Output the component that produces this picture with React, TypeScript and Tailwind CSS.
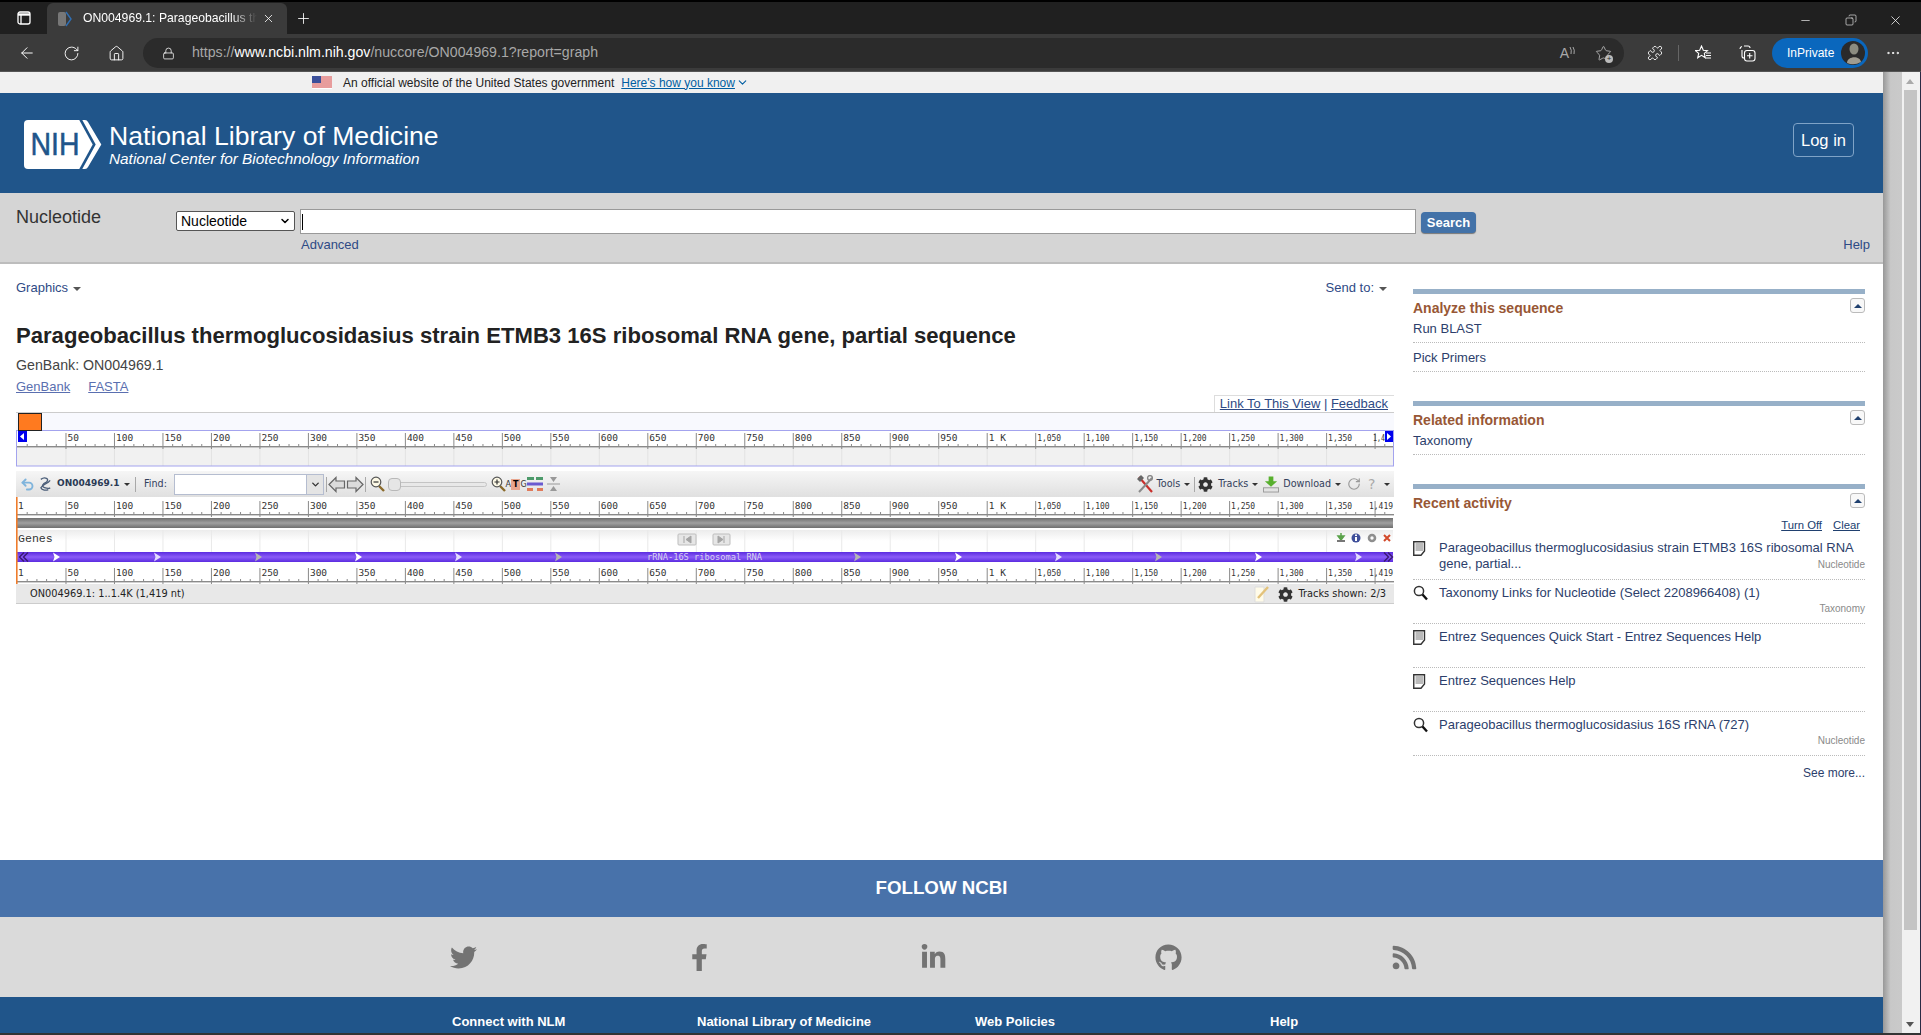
import React from "react";
import { ArrowLeft, RotateCw, Home, Lock, Plus, X, Minus, Star, Puzzle, MoreHorizontal, ChevronDown, Copy, Undo2 } from "lucide-react";
import { FaTwitter, FaFacebookF, FaLinkedinIn, FaGithub, FaRss, FaCog } from "react-icons/fa";

const PXN = 1376 / 1419;
const px = (n: number) => n * PXN + 1;

const labels: [number, string][] = [
  [50, "50"], [100, "100"], [150, "150"], [200, "200"], [250, "250"], [300, "300"], [350, "350"],
  [400, "400"], [450, "450"], [500, "500"], [550, "550"], [600, "600"], [650, "650"], [700, "700"],
  [750, "750"], [800, "800"], [850, "850"], [900, "900"], [950, "950"], [1000, "1 K"], [1050, "1,050"],
  [1100, "1,100"], [1150, "1,150"], [1200, "1,200"], [1250, "1,250"], [1300, "1,300"], [1350, "1,350"],
];

const minorTicks: number[] = [];
for (let n = 10; n < 1419; n += 10) minorTicks.push(n);

// one ruler, y is where the horizontal line sits
const Ruler = ({ y, first, last }: { y: number; first?: boolean; last?: string }) => (
  <g>
    <rect x="0" y={y} width="1378" height="1.4" fill="#8a8a8a" />
    {minorTicks.map((n) => (
      <rect key={n} x={px(n)} y={n % 50 === 0 ? y - 13 : y - 2} width="1" height={n % 50 === 0 ? 16 : 2} fill="#8a8a8a" />
    ))}
    {labels.map(([n, t]) => (
      <text
        key={n}
        x={px(n) + 2}
        y={y - 5}
        fontFamily="'DejaVu Sans Mono', monospace"
        fontSize="9.5"
        fill="#333"
        textLength={t.length === 5 ? 24 : undefined}
        lengthAdjust="spacingAndGlyphs"
      >
        {t}
      </text>
    ))}
    {first && (
      <text x="2" y={y - 5} fontFamily="'DejaVu Sans Mono', monospace" fontSize="9.5" fill="#333">
        1
      </text>
    )}
    {last && (
      <text x="1353" y={y - 5} fontFamily="'DejaVu Sans Mono', monospace" fontSize="9.5" fill="#333" textLength="24" lengthAdjust="spacingAndGlyphs">
        {last}
      </text>
    )}
  </g>
);

const arrows: [number, string][] = [
  [37, "#ffffff"], [138, "#e4dcff"], [239, "#b5b5b5"], [339, "#ffffff"], [439, "#e4dcff"], [539, "#b5b5b5"],
  [838, "#b5b5b5"], [939, "#ffffff"], [1039, "#e4dcff"], [1139, "#b5b5b5"], [1239, "#ffffff"], [1339, "#e4dcff"],
];

const Overview = () => (
  <svg width="1378" height="55" className="block">
    <rect x="0" y="0" width="1378" height="19" fill="#f8f9fe" />
    <rect x="0" y="0" width="1378" height="1" fill="#cccccc" />
    <rect x="0" y="19" width="1378" height="36" fill="#ffffff" />
    <rect x="1" y="35" width="1376" height="19" fill="#f1f1f1" />
    {labels.map(([n]) => (
      <rect key={n} x={px(n)} y="35" width="1" height="19" fill="#e2e2e2" />
    ))}
    <Ruler y={34} />
    <text x="1357" y="29" fontFamily="'DejaVu Sans Mono', monospace" fontSize="9.5" fill="#333" textLength="12" lengthAdjust="spacingAndGlyphs">
      1,4
    </text>
    <rect x="0.5" y="18.5" width="1377" height="35.5" fill="none" stroke="#a3a3ee" />
    <rect x="2.5" y="1.5" width="23" height="17" fill="#ff7a1f" stroke="#222" strokeWidth="1" />
    <rect x="2" y="19" width="9" height="11" fill="#0000ee" />
    <path d="M4 24.5 L8 21 L8 28 Z" fill="#fff" />
    <rect x="1369" y="19" width="8" height="11" fill="#0000ee" />
    <path d="M1375 24.5 L1371 21 L1371 28 Z" fill="#fff" />
  </svg>
);

const Tracks = () => (
  <svg width="1378" height="87" className="block">
    <defs>
      <linearGradient id="greybar" x1="0" y1="0" x2="0" y2="1">
        <stop offset="0" stopColor="#6f6f6f" />
        <stop offset="0.5" stopColor="#a0a0a0" />
        <stop offset="1" stopColor="#6f6f6f" />
      </linearGradient>
      <linearGradient id="genebar" x1="0" y1="0" x2="0" y2="1">
        <stop offset="0" stopColor="#5b2be0" />
        <stop offset="0.5" stopColor="#8a5cf7" />
        <stop offset="1" stopColor="#5b2be0" />
      </linearGradient>
      <linearGradient id="genesrow" x1="0" y1="0" x2="0" y2="1">
        <stop offset="0" stopColor="#ececec" />
        <stop offset="0.5" stopColor="#ffffff" />
      </linearGradient>
    </defs>
    <rect x="1" y="33" width="1376" height="22" fill="url(#genesrow)" />
    {labels.map(([n]) => (
      <rect key={n} x={px(n)} y="33" width="1" height="22" fill="#e9e9e9" />
    ))}
    <Ruler y={17} first last="1,419" />
    <rect x="1" y="21" width="1376" height="10" fill="url(#greybar)" />
    <text x="2" y="45" fontFamily="'Liberation Mono', monospace" fontSize="11.6" fill="#333">
      Genes
    </text>
    <rect x="662" y="37" width="18" height="11" rx="1" fill="#e6e6e6" stroke="#bdbdbd" />
    <path d="M668 39 V46 M675 39 L670 42.5 L675 46 Z" stroke="#a5a5a5" fill="#a5a5a5" />
    <rect x="697" y="37" width="17" height="11" rx="1" fill="#e6e6e6" stroke="#bdbdbd" />
    <path d="M708 39 V46 M702 39 L707 42.5 L702 46 Z" stroke="#a5a5a5" fill="#a5a5a5" />
    {/* small track icons */}
    <path d="M1325 36 L1325 40 M1322 39 L1325 43 L1328 39 Z" stroke="#5aa24a" strokeWidth="1.5" fill="#5aa24a" />
    <rect x="1321" y="43" width="8" height="2" fill="#777" />
    <circle cx="1340" cy="41" r="4.5" fill="#3f4f9a" />
    <rect x="1339" y="40" width="2" height="4" fill="#fff" />
    <rect x="1339" y="37.5" width="2" height="1.5" fill="#fff" />
    <circle cx="1356" cy="41" r="3" fill="none" stroke="#8e8e8e" strokeWidth="2.6" />
    <path d="M1368 38 L1374 44 M1374 38 L1368 44" stroke="#d2492a" strokeWidth="2" />
    <rect x="1" y="55" width="1376" height="10" fill="url(#genebar)" />
    <path d="M8 55.5 L3.5 60 L8 64.5 M12 55.5 L7.5 60 L12 64.5" fill="none" stroke="#3a1a70" strokeWidth="1.4" />
    <path d="M1368 55.5 L1372.5 60 L1368 64.5 M1372 55.5 L1376.5 60 L1372 64.5" fill="none" stroke="#3a1a70" strokeWidth="1.4" />
    {arrows.map(([x, c]) => (
      <path key={x} d={`M${x} 55.5 L${x + 7} 60 L${x} 64.5 L${x + 1.5} 60 Z`} fill={c} />
    ))}
    <text x="631" y="63" fontFamily="'DejaVu Sans Mono', monospace" fontSize="8.7" fill="#d8d0f0">
      rRNA-16S ribosomal RNA
    </text>
    <Ruler y={84} first last="1,419" />
    <rect x="0" y="0" width="1.6" height="87" fill="#ef7c2c" />
  </svg>
);

const Caret = () => <span className="ml-[4px] mt-[1px] h-0 w-0 border-x-[3px] border-t-[3px] border-x-transparent border-t-[#333]" />;
const BigCaret = () => <span className="ml-[5px] mt-[2px] h-0 w-0 border-x-[4px] border-t-[4px] border-x-transparent border-t-[#555]" />;

const ToolSep = ({ cls }: { cls: string }) => <span className={`h-[15px] w-px bg-[#a8a8a8] ${cls}`} />;

const Magnifier = ({ plus, cls }: { plus?: boolean; cls: string }) => (
  <svg width="15" height="16" viewBox="0 0 15 16" className={cls}>
    <path d="M9 10 L14 15" stroke="#8a6a2a" strokeWidth="2.4" />
    <circle cx="6" cy="6" r="4.8" fill="#fdf9e6" stroke="#555" strokeWidth="1.2" />
    <path d={plus ? "M3.5 6 H8.5 M6 3.5 V8.5" : "M3.5 6 H8.5"} stroke="#333" strokeWidth="1.2" />
  </svg>
);

const Toolbar = () => (
  <div className="flex h-[26px] w-[1378px] items-center bg-gradient-to-b from-[#f6f6f6] to-[#e0e0e0] font-['DejaVu_Sans',sans-serif] text-[9.6px] text-[#33415c]">
    <Undo2 className="ml-[4px] h-[15px] w-[15px] text-[#7fb4dc]" strokeWidth={3} />
    <svg width="13" height="16" viewBox="0 0 14 16" className="ml-[4px]" fill="none" stroke="#4a5d78" strokeWidth="1.4">
      <path d="M2 3 C6 0 12 2 8 6 C4 8 2 10 6 12 C9 13 11 13 12 12" />
      <path d="M12 4 C9 8 4 8 2 12 C3 15 8 15 10 14" />
    </svg>
    <span className="ml-[5px] w-[63px] text-[9px] font-bold text-[#2a3a55]">ON004969.1</span>
    <Caret />
    <ToolSep cls="ml-[5px]" />
    <span className="ml-[8px] w-[24px]">Find:</span>
    <span className="ml-[6px] flex h-[21px] w-[150px] items-center justify-end border border-[#b5bdd0] bg-white">
      <span className="flex h-full w-[17px] items-center justify-center border-l border-[#b5bdd0] bg-[#e4e4e4]">
        <ChevronDown className="h-[11px] w-[11px] text-[#333]" strokeWidth={3} />
      </span>
    </span>
    <ToolSep cls="ml-[2px]" />
    <svg width="36" height="17" viewBox="0 0 36 17" className="ml-[1px]" fill="#dcdcdc" stroke="#666" strokeWidth="1.2">
      <path d="M1 8.5 L8 1.5 V5 H16.5 V12 H8 V15.5 Z" />
      <path d="M35 8.5 L28 1.5 V5 H19.5 V12 H28 V15.5 Z" />
    </svg>
    <ToolSep cls="ml-[1px]" />
    <Magnifier cls="ml-[4px]" />
    <span className="relative ml-[3px] h-[5px] w-[99px] rounded-full border border-[#c4c4c4] bg-[#e8e8e8]">
      <span className="absolute -left-px -top-[5px] h-[13px] w-[13px] rounded-sm border border-[#b8b8b8] bg-[#e6e6e6]" />
    </span>
    <Magnifier plus cls="ml-[4px]" />
    <span className="ml-[2px] flex w-[16px] items-center justify-center text-[8px] leading-[11px] text-[#333]">
      A<span className="bg-[#e8a58e] px-[2px] font-bold text-black">T</span>G
    </span>
    <svg width="16" height="14" viewBox="0 0 16 14" className="ml-[3px]">
      <rect x="0" y="0" width="7" height="3" fill="#4c9a6a" />
      <rect x="9" y="0" width="7" height="3" fill="#4c9a6a" />
      <rect x="0" y="5.5" width="16" height="3" fill="#6a5ad0" />
      <rect x="0" y="11" width="6" height="3" fill="#e07a5a" />
      <rect x="10" y="11" width="6" height="3" fill="#e07a5a" />
    </svg>
    <svg width="13" height="14" viewBox="0 0 13 14" className="ml-[4px]" fill="#999">
      <path d="M3 0 H10 L6.5 5 Z M3 14 H10 L6.5 9 Z" />
      <rect x="0" y="6.5" width="13" height="1" />
    </svg>
    <span className="flex-1" />
    <svg width="16" height="18" viewBox="0 0 16 18" fill="none">
      <path d="M2 2 L15 17" stroke="#c9302c" strokeWidth="2.2" />
      <path d="M15 3 L2 17" stroke="#8a8a8a" strokeWidth="2" />
      <path d="M0 4 L4 0 L7 3 L3 7 Z" fill="#666" />
      <circle cx="13" cy="3" r="2.4" fill="none" stroke="#888" strokeWidth="1.4" />
    </svg>
    <span className="ml-[4px]">Tools</span>
    <Caret />
    <ToolSep cls="ml-[4px]" />
    <FaCog className="ml-[3px] h-[15px] w-[15px] text-[#333]" />
    <span className="ml-[5px]">Tracks</span>
    <Caret />
    <svg width="16" height="17" viewBox="0 0 17 17" className="ml-[5px]">
      <path d="M6 0 H11 V5 H15 L8.5 11 L2 5 H6 Z" fill="#58b02e" />
      <rect x="0.5" y="12" width="16" height="4.5" fill="#e3e3e3" stroke="#999" />
    </svg>
    <span className="ml-[4px]">Download</span>
    <Caret />
    <RotateCw className="ml-[6px] h-[14px] w-[14px] text-[#999]" />
    <span className="ml-[7px] w-[10px] text-[14px] leading-none text-[#aaa]">?</span>
    <span className="ml-[2px]" />
    <Caret />
    <span className="w-[4px]" />
  </div>
);

const StatusBar = () => (
  <div className="flex h-[20px] w-[1378px] items-center border-b border-[#ccc] bg-[#e8e8e8] pt-[1px] font-['DejaVu_Sans',sans-serif] text-[9.8px] text-[#222]">
    <span className="ml-[14px]">ON004969.1: 1..1.4K (1,419 nt)</span>
    <span className="flex-1" />
    <svg width="16" height="18" viewBox="0 0 16 18" fill="none">
      <path d="M1 2 H10 V17 H1 Z" fill="#fffbe8" stroke="#ddd" />
      <path d="M4 13 L14 2" stroke="#e3c27a" strokeWidth="2.4" />
    </svg>
    <FaCog className="ml-[8px] h-[15px] w-[15px] text-[#333]" />
    <span className="ml-[5px] mr-[8px]">Tracks shown: 2/3</span>
  </div>
);

const DocIcon = () => (
  <svg width="13" height="15" viewBox="0 0 13 15" className="mt-[1px]">
    <path d="M0.75 0.75 H11.5 V10 L8 14.25 H0.75 Z" fill="#fff" stroke="#333" strokeWidth="1.4" />
    <path d="M2.5 3 H10 M2.5 5 H10 M2.5 7 H10 M2.5 9 H10" stroke="#777" />
  </svg>
);

const GlassIcon = () => (
  <svg width="15" height="16" viewBox="0 0 15 16">
    <circle cx="6" cy="6" r="4.6" fill="#fff" stroke="#333" strokeWidth="1.5" />
    <path d="M9.5 9.5 L14 14.5" stroke="#111" strokeWidth="2.4" />
  </svg>
);

const CollapseBtn = () => (
  <span className="flex h-[15px] w-[15px] items-center justify-center rounded-[3px] border border-[#bbb] bg-[#f8f8f8]">
    <span className="h-0 w-0 border-x-[4px] border-b-[4px] border-x-transparent border-b-[#20406f]" />
  </span>
);

const PortletHead = ({ title }: { title: string }) => (
  <>
    <div className="h-[5px] bg-[#97b0c8]" />
    <div className="flex h-[21px] items-start justify-between pt-[4px]">
      <span className="text-[14px] font-bold leading-[20px] text-[#985735]">{title}</span>
      <CollapseBtn />
    </div>
  </>
);

const PlainRow = ({ text, cls }: { text: string; cls: string }) => (
  <div className={`flex items-center border-b border-dotted border-[#bbb] pt-[1px] text-[13px] text-[#2c3e6b] ${cls}`}>{text}</div>
);

const activity: { kind: "doc" | "find"; text: string; tag?: string; h: string }[] = [
  { kind: "doc", text: "Parageobacillus thermoglucosidasius strain ETMB3 16S ribosomal RNA gene, partial...", tag: "Nucleotide", h: "h-[45px]" },
  { kind: "find", text: "Taxonomy Links for Nucleotide (Select 2208966408) (1)", tag: "Taxonomy", h: "h-[44px]" },
  { kind: "doc", text: "Entrez Sequences Quick Start - Entrez Sequences Help", h: "h-[44px]" },
  { kind: "doc", text: "Entrez Sequences Help", h: "h-[44px]" },
  { kind: "find", text: "Parageobacillus thermoglucosidasius 16S rRNA (727)", tag: "Nucleotide", h: "h-[44px]" },
];

const Sidebar = () => (
  <div className="ml-[19px] w-[452px] pt-[25px]">
    <PortletHead title="Analyze this sequence" />
    <PlainRow text="Run BLAST" cls="h-[28px]" />
    <PlainRow text="Pick Primers" cls="h-[29px]" />
    <div className="h-[29px]" />
    <PortletHead title="Related information" />
    <PlainRow text="Taxonomy" cls="h-[28px]" />
    <div className="h-[29px]" />
    <PortletHead title="Recent activity" />
    <div className="flex h-[25px] items-end justify-end gap-[11px] pb-[3px] pr-[5px] text-[11.3px] leading-[14px] text-[#20406f] underline">
      <span>Turn Off</span>
      <span>Clear</span>
    </div>
    {activity.map((a, i) => (
      <div key={i} className={`relative flex border-b border-dotted border-[#bbb] pt-[5px] text-[13px] leading-[16px] text-[#2c3e6b] ${a.h}`}>
        <span className="w-[26px] shrink-0">{a.kind === "doc" ? <DocIcon /> : <GlassIcon />}</span>
        <span>{a.text}</span>
        {a.tag && <span className="absolute bottom-[8px] right-0 text-[10px] leading-[12px] text-[#8a8a8a]">{a.tag}</span>}
      </div>
    ))}
    <div className="pt-[9px] text-right text-[12px] leading-[16px] text-[#2c3e6b]">See more...</div>
  </div>
);

const BrowserChrome = () => (
  <div className="font-['Liberation_Sans',sans-serif]">
    <div className="flex h-[34px] items-end border-t-2 border-black bg-[#202020]">
      <svg width="14" height="14" viewBox="0 0 14 14" className="mb-[9px] ml-[17px]" fill="none" stroke="#fff" strokeWidth="1.3">
        <rect x="1" y="1" width="12" height="12" rx="2" />
        <path d="M1 3.5 H13" strokeWidth="2.4" />
        <path d="M4 3 V13" />
      </svg>
      <div className="ml-[16px] flex h-[31px] w-[240px] items-center rounded-t-[6px] bg-[#3b3b3b]">
        <svg width="14" height="16" viewBox="0 0 14 16" className="ml-[11px]">
          <rect x="0" y="1" width="8" height="14" rx="2" fill="#777" />
          <path d="M8 1 L13 8 L8 15" fill="none" stroke="#2f6fb5" strokeWidth="1.4" />
        </svg>
        <span className="ml-[11px] w-[174px] overflow-hidden whitespace-nowrap text-[12.2px] text-white [mask-image:linear-gradient(to_right,black_85%,transparent)]">
          ON004969.1: Parageobacillus the
        </span>
        <X className="ml-[5px] h-[13px] w-[13px] text-white" strokeWidth={1.5} />
      </div>
      <Plus className="mb-[7px] ml-[8px] h-[17px] w-[17px] text-white" strokeWidth={1.2} />
      <span className="flex-1" />
      <Minus className="mb-[7px] mr-[33px] h-[13px] w-[13px] text-white" strokeWidth={1.2} />
      <Copy className="mb-[8px] mr-[31px] h-[12px] w-[12px] -scale-x-100 text-white" strokeWidth={1.2} />
      <X className="mb-[6px] mr-[18px] h-[15px] w-[15px] text-white" strokeWidth={1.2} />
    </div>
    <div className="flex h-[38px] items-center border-b border-[#555] bg-[#3b3b3b] pt-[1px]">
      <ArrowLeft className="ml-[18px] h-[18px] w-[18px] text-white" strokeWidth={1.3} />
      <RotateCw className="ml-[27px] h-[17px] w-[17px] text-white" strokeWidth={1.3} />
      <Home className="ml-[28px] h-[17px] w-[17px] text-white" strokeWidth={1.3} />
      <div className="ml-[18px] flex h-[30px] w-[1481px] items-center rounded-full bg-[#2b2b2b] pr-[12px]">
        <Lock className="ml-[19px] h-[15px] w-[13px] text-white" strokeWidth={1.4} />
        <span className="ml-[17px] text-[14.15px] text-[#a8a8a8]">
          https://<span className="text-white">www.ncbi.nlm.nih.gov</span>/nuccore/ON004969.1?report=graph
        </span>
        <span className="flex-1" />
        <span className="text-[14px] text-[#a8a8a8]">A</span>
        <svg width="6" height="9" viewBox="0 0 6 9" fill="none" stroke="#a8a8a8" className="mb-[6px] mr-[20px]">
          <path d="M1 1 Q3 4 2 8 M4 1 Q6 4 5 8" />
        </svg>
        <span className="relative">
          <Star className="h-[17px] w-[17px] text-[#bbb]" strokeWidth={1.2} />
          <span className="absolute -bottom-[1px] -right-[1px] flex h-[8px] w-[8px] items-center justify-center rounded-full bg-[#bbb] text-[8px] leading-none text-[#2b2b2b]">+</span>
        </span>
      </div>
      <Puzzle className="ml-[23px] h-[16px] w-[16px] text-white" strokeWidth={1.3} />
      <span className="ml-[15px] h-[16px] w-px bg-[#666]" />
      <svg width="17" height="16" viewBox="0 0 17 16" className="ml-[16px]" fill="none" stroke="#fff" strokeWidth="1.1">
        <path d="M6.5 1 L8.3 5.2 L12.5 5.6 L9.3 8.4 L10.3 12.8 L6.5 10.4 L2.7 12.8 L3.7 8.4 L0.5 5.6 L4.7 5.2 Z" />
        <path d="M11 8 H16 M11 10.5 H16 M11 13 H16" />
      </svg>
      <svg width="17" height="17" viewBox="0 0 17 17" className="ml-[27px]" fill="none" stroke="#fff" strokeWidth="1.1">
        <path d="M5 1 H9 Q11 1 11 3 M3 5 V11 Q3 13 5 13" />
        <path d="M1 4 Q1 2 3 1.5" />
        <rect x="5.5" y="5.5" width="10.5" height="10.5" rx="2.5" />
        <path d="M10.7 8 V13.5 M8 10.7 H13.5" />
      </svg>
      <div className="ml-[16px] flex h-[30px] w-[96px] items-center rounded-full bg-[#0a67bd] pl-[15px]">
        <span className="text-[12px] text-white">InPrivate</span>
        <svg width="26" height="26" viewBox="0 0 26 26" className="ml-[6px]">
          <circle cx="13" cy="13" r="12" fill="#2a2a2a" />
          <ellipse cx="14" cy="9" rx="4.5" ry="5.5" fill="#8c8c80" />
          <path d="M7 23 C7 16 20 15 21 22 Q14 26 7 23 Z" fill="#a09c90" />
        </svg>
      </div>
      <MoreHorizontal className="ml-[17px] h-[16px] w-[16px] text-white" strokeWidth={1.5} />
    </div>
  </div>
);

const Flag = () => (
  <svg width="20" height="13" viewBox="0 0 20 13">
    <rect width="20" height="13" fill="#fff" />
    <path d="M0 1 H20 M0 3 H20 M0 5 H20 M0 7 H20 M0 9 H20 M0 11 H20" stroke="#d03b3b" strokeWidth="1" />
    <rect width="9" height="7" fill="#3b4f9a" />
  </svg>
);

const NihLogo = () => (
  <svg width="78" height="49" viewBox="0 0 78 49" className="mt-[3px] shrink-0">
    <path d="M4 0 H55.3 L68.7 24.5 L55.3 49 H4 Q0 49 0 45 V4 Q0 0 4 0 Z" fill="#fff" />
    <path d="M58.3 0 H61 Q63 0 64 2 L77.3 24.5 L64 47 Q63 49 61 49 H58.3 L71.7 24.5 Z" fill="#fff" />
    <text x="6.5" y="35" fontFamily="'Liberation Sans', sans-serif" fontSize="31" fill="#20558a" stroke="#20558a" strokeWidth="0.5" textLength="49" lengthAdjust="spacingAndGlyphs">
      NIH
    </text>
  </svg>
);

const Page = () => (
  <div className="w-[1884px] bg-white font-['Liberation_Sans',sans-serif]">
    <div className="flex h-[21px] items-center bg-[#f0f0f0] pl-[312px] text-[12px] text-[#222]">
      <Flag />
      <span className="ml-[11px]">An official website of the United States government</span>
      <span className="ml-[7px] text-[#005ea2] underline">Here's how you know</span>
      <ChevronDown className="ml-[1px] h-[13px] w-[13px] text-[#005ea2]" strokeWidth={2} />
    </div>
    <div className="flex h-[100px] items-center bg-[#20558a] pl-[24px] pr-[29px]">
      <NihLogo />
      <div className="ml-[7px] mt-[3px] text-white">
        <div className="text-[26.6px] leading-[28px]">National Library of Medicine</div>
        <div className="text-[15.35px] italic leading-[17px]">National Center for Biotechnology Information</div>
      </div>
      <span className="flex-1" />
      <span className="-mt-[6px] flex h-[34px] w-[61px] items-center justify-center rounded-[4px] border border-[#7fa3c7] text-[16.5px] text-white">Log in</span>
    </div>
    <div className="h-[71px] border-b-2 border-[#bdbdbd] bg-[#d5d5d5]">
      <div className="flex items-start pl-[16px] pt-[14px]">
        <span className="w-[160px] text-[18px] leading-[20px] text-[#333]">Nucleotide</span>
        <span className="mt-[4px] flex h-[20px] w-[119px] items-center justify-between rounded-[2px] border border-[#555] bg-white pl-[4px] pr-[3px] text-[14px] text-black">
          Nucleotide
          <ChevronDown className="h-[12px] w-[12px]" strokeWidth={3} />
        </span>
        <div className="ml-[5px] mt-[2px]">
          <span className="flex h-[25px] w-[1116px] items-center border border-[#999] bg-white pl-[1px]">
            <span className="h-[16px] w-px bg-black" />
          </span>
          <div className="mt-[2px] pl-[1px] text-[13px] leading-[17px] text-[#2e4a85]">Advanced</div>
        </div>
        <span className="ml-[5px] mt-[5px] flex h-[21px] w-[55px] items-center justify-center rounded-[4px] bg-[#4372a8] text-[13px] font-bold text-white shadow-[0_1px_1px_#777]">Search</span>
        <span className="ml-auto mr-[13px] mt-[29px] text-[13px] leading-[17px] text-[#2e4a85]">Help</span>
      </div>
    </div>
    <div className="flex h-[596px]">
      <div className="w-[1394px] pl-[16px]">
        <div className="flex items-center justify-between pt-[15px] text-[13px] leading-[17px] text-[#2e4a85]">
          <span className="flex items-center">Graphics<BigCaret /></span>
          <span className="mr-[7px] flex items-center">Send to:<BigCaret /></span>
        </div>
        <h1 className="mt-[27px] text-[22.1px] font-bold leading-[26px] text-[#222]">
          Parageobacillus thermoglucosidasius strain ETMB3 16S ribosomal RNA gene, partial sequence
        </h1>
        <div className="mt-[8px] text-[14.2px] leading-[16px] text-[#444]">GenBank: ON004969.1</div>
        <div className="mt-[5px] flex gap-[18px] text-[13px] leading-[17px] text-[#5a6fb0] underline">
          <span>GenBank</span>
          <span>FASTA</span>
        </div>
        <div className="flex w-[1378px] justify-end">
          <span className="h-[17px] border-l border-t border-[#ddd] pl-[5px] pr-[6px] text-[13px] leading-[16px] text-[#2e4a85]">
            <span className="underline">Link To This View</span> | <span className="underline">Feedback</span>
          </span>
        </div>
        <Overview />
        <div className="h-[4px]" />
        <Toolbar />
        <Tracks />
        <StatusBar />
      </div>
      <Sidebar />
    </div>
    <div className="flex h-[57px] items-center justify-center bg-[#4872aa] text-[18.7px] font-bold text-white">FOLLOW NCBI</div>
    <div className="flex h-[80px] items-center bg-[#dadada] pl-[450px] text-[27px] text-[#737373]">
      <span className="flex w-[236px]"><FaTwitter /></span>
      <span className="flex w-[234px]"><FaFacebookF /></span>
      <span className="flex w-[235px]"><FaLinkedinIn /></span>
      <span className="flex w-[236px]"><FaGithub /></span>
      <span className="flex"><FaRss /></span>
    </div>
    <div className="flex h-[36px] items-start bg-[#20558a] pt-[17px] text-[13px] font-bold leading-[16px] text-white">
      <span className="ml-[452px] w-[245px]">Connect with NLM</span>
      <span className="w-[278px]">National Library of Medicine</span>
      <span className="w-[295px]">Web Policies</span>
      <span>Help</span>
    </div>
  </div>
);

const Scrollbar = () => (
  <div className="flex flex-1">
    <div className="w-[19px] bg-gradient-to-r from-[#989898] via-[#c8c8c8] via-40% to-[#cacaca]" />
    <div className="flex flex-1 flex-col bg-[#f1f1f1] pl-[2px] pr-[3px]">
      <span className="ml-[2px] mt-[7px] h-0 w-0 border-x-[4px] border-b-[5px] border-x-transparent border-b-[#aaa]" />
      <span className="mt-[6px] h-[840px] w-[13px] bg-[#c4c4c4]" />
      <span className="ml-[2px] mt-[92px] h-0 w-0 border-x-[4px] border-t-[5px] border-x-transparent border-t-[#555]" />
    </div>
    <div className="w-px bg-[#2a2a44]" />
  </div>
);

export default function App() {
  return (
    <div className="flex h-[1035px] w-[1921px] flex-col overflow-hidden bg-[#333]">
      <BrowserChrome />
      <div className="flex h-[961px]">
        <Page />
        <Scrollbar />
      </div>
    </div>
  );
}
